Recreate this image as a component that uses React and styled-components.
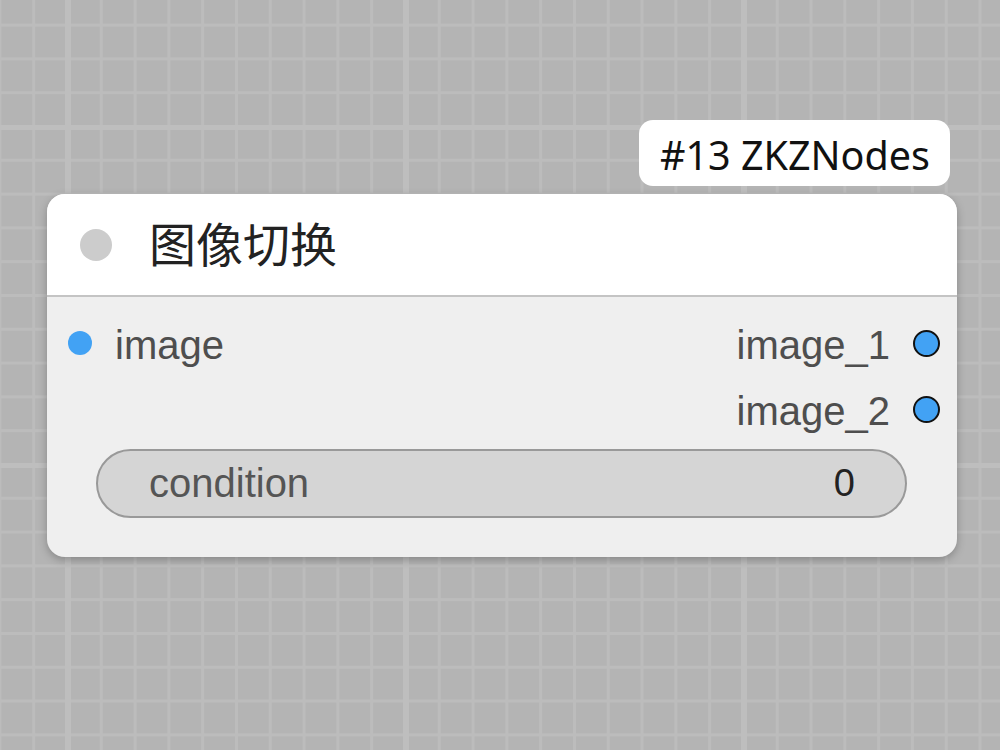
import React from 'react';
import styled, {createGlobalStyle} from 'styled-components';

const GlobalStyle = createGlobalStyle`
    html, body {
        margin: 0;
        padding: 0;
        width: 1000px;
        height: 750px;
        overflow: hidden;
    }
    body {
        font-family: "Liberation Sans", Arial, sans-serif;
    }
`;

const GRID = 33.8;

function App() {
    const inputs = [{name: "image"}];
    const outputs = [{name: "image_1"}, {name: "image_2"}];

    return (
        <>
            <GlobalStyle />
            <Canvas>
                <Node>
                    <Badge>#13 ZKZNodes</Badge>
                    <Header>
                        <StatusDot />
                        <Title>图像切换</Title>
                    </Header>
                    <Body>
                        <Slots>
                            <Column>
                                {inputs.map((s) => (
                                    <Slot key={s.name}>
                                        <InputDot />
                                        <SlotLabel>{s.name}</SlotLabel>
                                    </Slot>
                                ))}
                            </Column>
                            <Column $right>
                                {outputs.map((s) => (
                                    <Slot key={s.name}>
                                        <SlotLabel>{s.name}</SlotLabel>
                                        <OutputDot />
                                    </Slot>
                                ))}
                            </Column>
                        </Slots>
                        <Widget>
                            <WidgetLabel>condition</WidgetLabel>
                            <WidgetValue>0</WidgetValue>
                        </Widget>
                    </Body>
                </Node>
            </Canvas>
        </>
    );
}

export default App;

const Canvas = styled.div`
    position: relative;
    width: 1000px;
    height: 750px;
    overflow: hidden;
    background-color: #b4b4b4;
    background-image:
        linear-gradient(to right, transparent 0, transparent 2px, #bebebe 2px, #bebebe 8px, transparent 8px),
        linear-gradient(to bottom, transparent 0, transparent 2px, #bebebe 2px, #bebebe 7px, transparent 7px),
        linear-gradient(to right, #bcbcbc 0, #bcbcbc 3px, transparent 3px),
        linear-gradient(to bottom, #bcbcbc 0, #bcbcbc 3px, transparent 3px);
    background-size:
        ${GRID * 10}px 100%,
        100% ${GRID * 10}px,
        ${GRID}px 100%,
        100% ${GRID}px;
    background-position:
        63px 0,
        0 123px,
        ${66 - GRID * 2}px 0,
        0 ${125 - GRID * 4}px;
`;

const Node = styled.div`
    position: absolute;
    left: 47px;
    top: 194px;
    width: 910px;
    height: 363px;
    border-radius: 18px;
    background: #efefef;
    box-shadow: 0 3px 8px rgba(0, 0, 0, 0.25);
    display: flex;
    flex-direction: column;
`;

const Badge = styled.div`
    position: absolute;
    right: 7px;
    top: -74px;
    height: 66px;
    padding: 4px 20px 0 21px;
    box-sizing: border-box;
    background: #ffffff;
    border-radius: 14px;
    display: flex;
    align-items: center;
    font-family: "Noto Sans", sans-serif;
    font-size: 39.5px;
    color: #111;
    white-space: nowrap;
`;

const Header = styled.div`
    height: 101px;
    flex-shrink: 0;
    background: #ffffff;
    border-radius: 18px 18px 0 0;
    border-bottom: 2px solid #c4c4c4;
    display: flex;
    align-items: center;
    padding-left: 33px;
`;

const StatusDot = styled.div`
    width: 32px;
    height: 32px;
    border-radius: 50%;
    background: #cccccc;
`;

const Title = styled.div`
    margin: -7px 0 0 37px;
    font-family: "Noto Sans CJK SC", "Noto Sans", sans-serif;
    font-size: 47px;
    color: #222;
    line-height: 1;
`;

const Body = styled.div`
    flex: 1;
    display: flex;
    flex-direction: column;
    padding: 14px 17px 0 21px;
`;

const Slots = styled.div`
    display: flex;
    justify-content: space-between;
`;

const Column = styled.div`
    display: flex;
    flex-direction: column;
    align-items: ${(p) => (p.$right ? 'flex-end' : 'flex-start')};
`;

const Slot = styled.div`
    height: 66px;
    display: flex;
    align-items: center;
    gap: 23px;
`;

const SlotLabel = styled.span`
    font-size: 40px;
    color: #4e4e4e;
    line-height: 1;
    margin-top: 2px;
`;

const InputDot = styled.div`
    width: 24px;
    height: 24px;
    border-radius: 50%;
    background: #42a2f4;
    margin-top: -3px;
`;

const OutputDot = styled.div`
    width: 23px;
    height: 23px;
    border-radius: 50%;
    background: #42a2f4;
    border: 2px solid #111;
    margin-top: -2px;
`;

const Widget = styled.div`
    margin: 6px 33px 0 28px;
    height: 69px;
    box-sizing: border-box;
    border-radius: 35px;
    background: #d5d5d5;
    border: 2.5px solid #999999;
    display: flex;
    align-items: center;
    justify-content: space-between;
    padding: 0 50px 0 51px;
`;

const WidgetLabel = styled.span`
    font-size: 40px;
    color: #555;
`;

const WidgetValue = styled.span`
    font-size: 38px;
    color: #222;
`;
